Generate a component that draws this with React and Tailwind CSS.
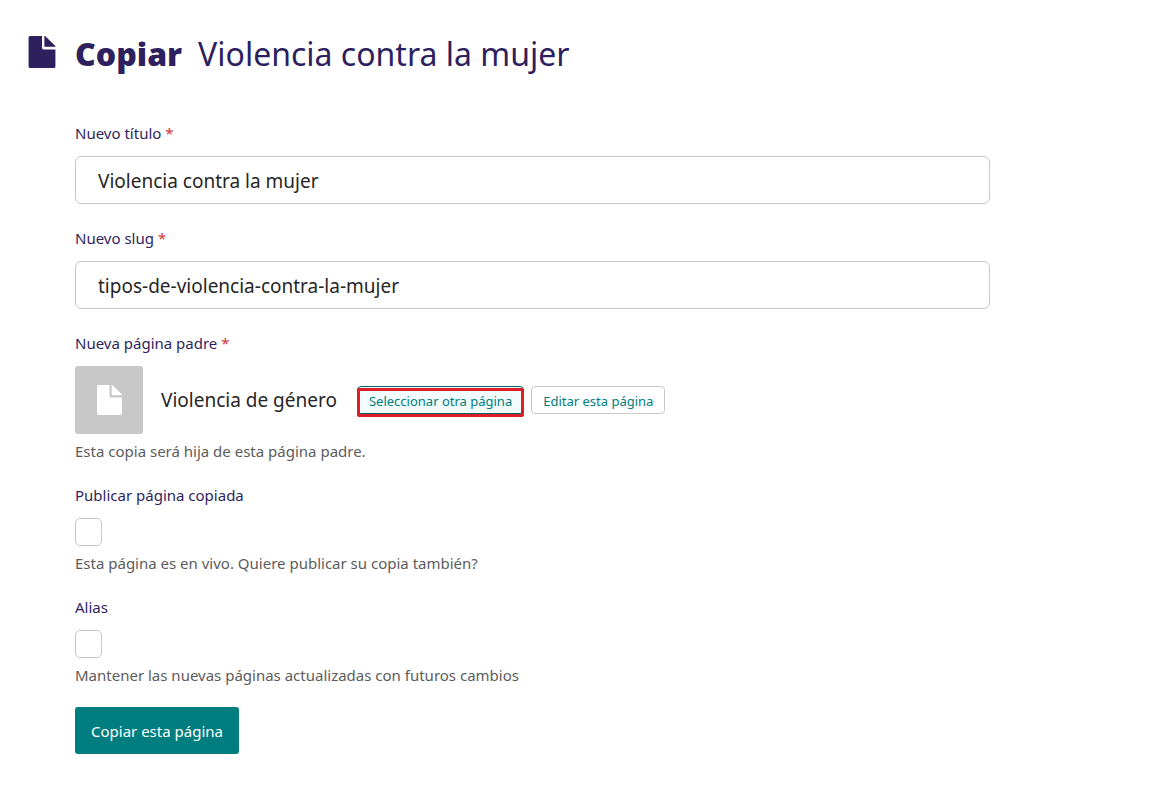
import React from "react";

function DocIcon({ className }) {
  return (
    <svg viewBox="0 0 26 31" className={className} fill="currentColor" aria-hidden="true">
      <path d="M1.5 0H13V11.5Q13 13 14.500 13H26V29.500Q26 31 24.500 31H1.500Q0 31 0 29.500V1.500Q0 0 1.500 0Z" />
      <path d="M15.300 0H16L26 9.800V10.500H15.300Z" />
    </svg>
  );
}

function Field({ id, label, required, help, children, className = "mb-5" }) {
  return (
    <div className={className}>
      <label htmlFor={id} className="mb-[11px] block text-[15px] leading-6 text-[#2e1f5e]">
        {label}
        {required && <span className="text-[#cd3238]"> *</span>}
      </label>
      {children}
      {help && (
        <p id={`${id}-help`} className="mt-[5px] text-[15px] leading-6 text-[#5c5c5c]">
          {help}
        </p>
      )}
    </div>
  );
}

function TextInput({ id, value }) {
  return (
    <input
      id={id}
      type="text"
      required
      defaultValue={value}
      className="block h-12 w-full rounded-md border border-[#c8c8c8] bg-white px-[22px] pt-0.5 text-[19px] text-[#262626]"
    />
  );
}

function Checkbox({ id }) {
  return (
    <input
      id={id}
      type="checkbox"
      aria-describedby={`${id}-help`}
      className="block h-7 w-[27px] appearance-none rounded-[5px] border border-[#c8c8c8] bg-white checked:bg-[#007d7e]"
    />
  );
}

export default function App() {
  return (
    <main className="min-h-screen bg-white px-7 pt-[30px] pb-12 font-['Noto_Sans','Open_Sans',sans-serif]">
      <header className="mb-[43px] flex items-center gap-[19px] text-[#2e1f5e]">
        <DocIcon className="mb-1 h-8 w-7 shrink-0" />
        <h1 className="flex flex-wrap items-center gap-x-4 text-[32px] leading-[48px]">
          <span className="font-black">Copiar</span>
          <span className="font-normal">Violencia contra la mujer</span>
        </h1>
      </header>

      <form className="ml-[47px] max-w-[915px]" onSubmit={(e) => e.preventDefault()}>
        <Field id="title" label="Nuevo título" required className="mb-[22px]">
          <TextInput id="title" value="Violencia contra la mujer" />
        </Field>
        <Field id="slug" label="Nuevo slug" required className="mb-[22px]">
          <TextInput id="slug" value="tipos-de-violencia-contra-la-mujer" />
        </Field>
        <Field id="parent" label="Nueva página padre" required help="Esta copia será hija de esta página padre.">
          <div className="flex flex-wrap items-center">
            <div className="flex size-[68px] items-center justify-center rounded-[3px] bg-[#c8c8c8] text-white">
              <DocIcon className="h-[30px] w-[25px]" />
            </div>
            <span className="mr-5 ml-[18px] text-[19px] leading-7 text-[#262626]">Violencia de género</span>
            <div className="flex gap-[7px]">
              <div className="relative">
                <button
                  id="parent"
                  type="button"
                  aria-describedby="parent-help"
                  className="block h-7 rounded-[4px] border border-[#006667] bg-[#f2fcfc] px-[11px] pt-0.5 text-[13px] leading-5 text-[#007d7e]"
                >
                  Seleccionar otra página
                </button>
                <span className="pointer-events-none absolute inset-x-0 top-0.5 -bottom-[3px] rounded-[2px] border-[3px] border-[#dc1f26]" />
              </div>
              <button
                type="button"
                className="block h-7 rounded-[4px] border border-[#c8c8c8] bg-white px-[11px] pt-0.5 text-[13px] leading-5 text-[#007d7e]"
              >
                Editar esta página
              </button>
            </div>
          </div>
        </Field>
        <Field
          id="publish"
          label="Publicar página copiada"
          help="Esta página es en vivo. Quiere publicar su copia también?"
        >
          <Checkbox id="publish" />
        </Field>
        <Field id="alias" label="Alias" help="Mantener las nuevas páginas actualizadas con futuros cambios">
          <Checkbox id="alias" />
        </Field>
        <button type="submit" className="h-[47px] rounded-[3px] bg-[#007d7e] px-4 pt-0.5 text-[15px] text-white">
          Copiar esta página
        </button>
      </form>
    </main>
  );
}
